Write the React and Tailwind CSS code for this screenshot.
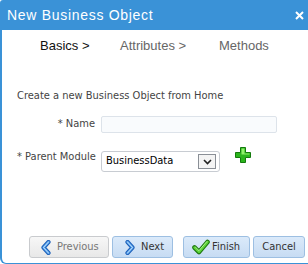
import React from "react";

const F = { fontFamily: '"Liberation Sans", Arial, sans-serif' };
const T = { fontFamily: '"DejaVu Sans Condensed", "Liberation Sans", sans-serif' };

function Chevron({ dir }) {
  const d = dir === "left" ? "M7.5 2 L2.5 7.5 L7.5 13" : "M2.5 2 L7.5 7.5 L2.5 13";
  return (
    <svg width="10" height="15" viewBox="0 0 10 15">
      <path d={d} fill="none" stroke="#1d5fb8" strokeWidth="4.2" strokeLinecap="round" strokeLinejoin="round" />
      <path d={d} fill="none" stroke="#5aa6ee" strokeWidth="2.2" strokeLinecap="round" strokeLinejoin="round" />
      <path d={d} fill="none" stroke="#e6f2ff" strokeWidth="0.7" strokeLinecap="round" strokeLinejoin="round" />
    </svg>
  );
}

function Check() {
  return (
    <svg width="18" height="16" viewBox="0 0 18 16">
      <path d="M2.5 8.5 L7 13 L15.5 3" fill="none" stroke="#1f7a12" strokeWidth="4.6" strokeLinecap="round" strokeLinejoin="round" />
      <path d="M2.5 8.5 L7 13 L15.5 3" fill="none" stroke="#5fd63a" strokeWidth="2.4" strokeLinecap="round" strokeLinejoin="round" />
      <path d="M3.5 8.2 L7 11.6 L14.8 2.6" fill="none" stroke="#c9ffb0" strokeWidth="0.7" strokeLinecap="round" />
    </svg>
  );
}

function Plus() {
  return (
    <svg width="16" height="16" viewBox="0 0 16 16">
      <path d="M5.5 0.5 H10.5 V5.5 H15.5 V10.5 H10.5 V15.5 H5.5 V10.5 H0.5 V5.5 H5.5 Z" fill="#2bb51c" stroke="#137a0c" strokeWidth="1" />
      <path d="M6.5 1.5 H9.5 V6.5 H14.5 V7.5 H6.5 Z" fill="#8ff06a" />
    </svg>
  );
}

export default function App() {
  return (
    <div className="w-[308px] h-[264px] bg-white overflow-hidden flex flex-col" style={F}>
      <div className="h-[30px] bg-[#3a92d7] flex items-center justify-between pl-[7px] pr-[4px] rounded-tl-[3px]">
        <span className="text-white text-[14px] tracking-[0.7px]">
          New Business Object
        </span>
        <svg width="9" height="9" viewBox="0 0 9 9">
          <path d="M1 1 L8 8 M8 1 L1 8" stroke="white" strokeWidth="2" />
        </svg>
      </div>
      <div className="flex-1 border-l-2 border-b border-[#3a92d7] rounded-bl-[6px] flex flex-col">
        <div className="flex text-[13px] leading-[16px] pt-[8px] pl-[38px]">
          <span className="w-[80px] text-[#111]">Basics &gt;</span>
          <span className="w-[99px] text-[#666]">Attributes &gt;</span>
          <span className="text-[#666]">Methods</span>
        </div>
        <div className="mt-[35px] pl-[15px] text-[11px] leading-[14px] text-[#444]" style={T}>
          Create a new Business Object from Home
        </div>
        <div className="mt-[13px] flex items-center" style={T}>
          <div className="w-[93px] text-right text-[11px] text-[#444]">* Name</div>
          <div className="ml-[6px] w-[176px] h-[17px] border border-[#dde3ea] bg-[#f9fbfd] rounded-[2px]" />
        </div>
        <div className="mt-[17px] flex items-start" style={T}>
          <div className="w-[93px] pl-[15px] text-[11px] leading-[14px] text-[#444] whitespace-nowrap">* Parent Module</div>
          <div className="ml-[6px] w-[119px] h-[21px] border border-[#c8ccd2] rounded-[3px] bg-white flex items-center justify-between pl-[4px] pr-[3px] mt-[1px]">
            <span className="text-[11px] text-black">BusinessData</span>
            <div className="w-[18px] h-[15px] border border-[#8a8f96] bg-[#f4f4f4] flex items-center justify-center">
              <svg width="9" height="6" viewBox="0 0 9 6">
                <path d="M1 1 L4.5 4.5 L8 1" fill="none" stroke="#222" strokeWidth="1.6" />
              </svg>
            </div>
          </div>
          <div className="ml-[15px] mt-[-3px]">
            <Plus />
          </div>
        </div>
        <div className="flex-1" />
        <div className="flex items-center pl-[27px] mb-[5px] text-[11px]" style={T}>
          <div className="w-[80px] h-[22px] rounded-[3px] border border-[#c9cbce] bg-gradient-to-b from-[#f7f7f7] to-[#e8e8e8] flex items-center pl-[11px] gap-[6px] text-[#777]">
            <Chevron dir="left" />
            <span>Previous</span>
          </div>
          <div className="ml-[3px] w-[61px] h-[22px] rounded-[3px] border border-[#9dbfe2] bg-gradient-to-b from-[#dbeafa] to-[#c7dcf3] flex items-center pl-[12px] gap-[6px] text-[#333]">
            <Chevron dir="right" />
            <span>Next</span>
          </div>
          <div className="ml-[10px] w-[67px] h-[22px] rounded-[3px] border border-[#9dbfe2] bg-gradient-to-b from-[#dbeafa] to-[#c7dcf3] flex items-center pl-[8px] gap-[2px] text-[#333]">
            <Check />
            <span>Finish</span>
          </div>
          <div className="ml-[3px] w-[52px] h-[22px] rounded-[3px] border border-[#9dbfe2] bg-gradient-to-b from-[#dbeafa] to-[#c7dcf3] flex items-center justify-center text-[#333]">
            <span>Cancel</span>
          </div>
        </div>
      </div>
    </div>
  );
}
